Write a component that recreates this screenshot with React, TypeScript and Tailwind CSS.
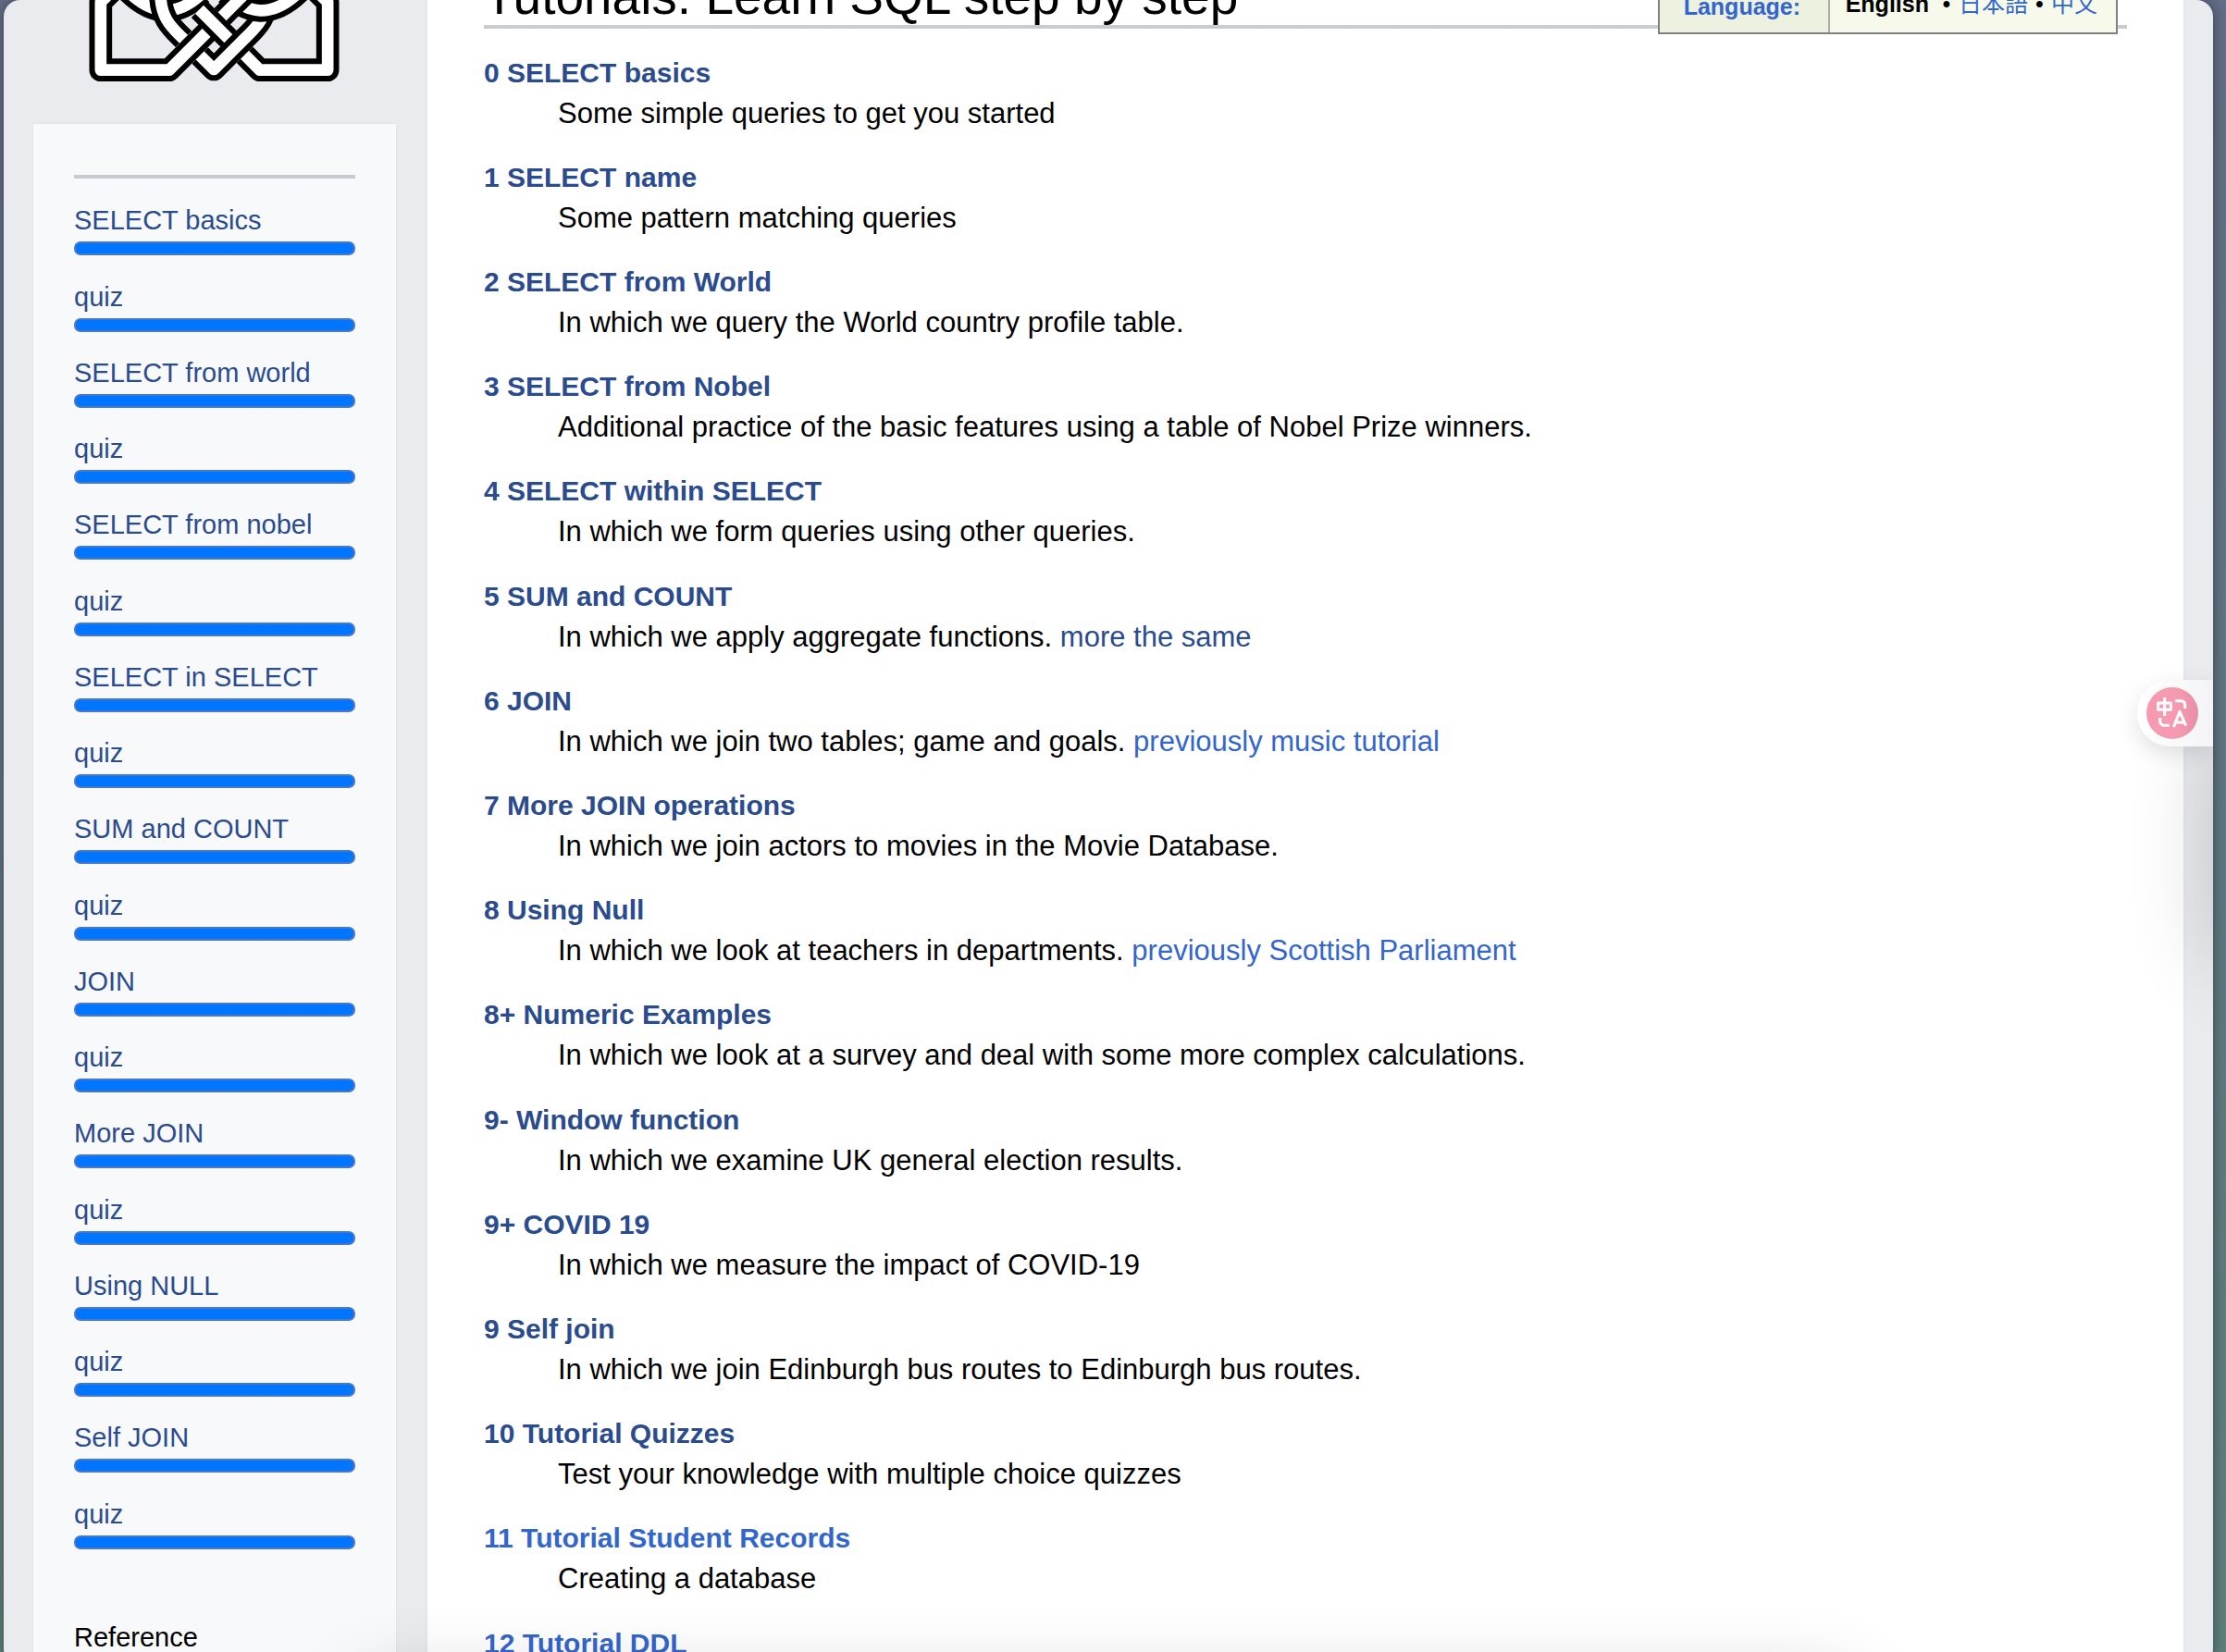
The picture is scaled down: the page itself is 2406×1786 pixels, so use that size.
const lessons = [
  "SELECT basics", "quiz", "SELECT from world", "quiz", "SELECT from nobel", "quiz",
  "SELECT in SELECT", "quiz", "SUM and COUNT", "quiz", "JOIN", "quiz",
  "More JOIN", "quiz", "Using NULL", "quiz", "Self JOIN", "quiz",
];

type Entry = {
  title: string;
  text?: string;
  fresh?: boolean;
  extra?: { label: string; fresh: boolean };
};

const tutorials: Entry[] = [
  { title: "0 SELECT basics", text: "Some simple queries to get you started" },
  { title: "1 SELECT name", text: "Some pattern matching queries" },
  { title: "2 SELECT from World", text: "In which we query the World country profile table." },
  { title: "3 SELECT from Nobel", text: "Additional practice of the basic features using a table of Nobel Prize winners." },
  { title: "4 SELECT within SELECT", text: "In which we form queries using other queries." },
  { title: "5 SUM and COUNT", text: "In which we apply aggregate functions.", extra: { label: "more the same", fresh: false } },
  { title: "6 JOIN", text: "In which we join two tables; game and goals.", extra: { label: "previously music tutorial", fresh: true } },
  { title: "7 More JOIN operations", text: "In which we join actors to movies in the Movie Database." },
  { title: "8 Using Null", text: "In which we look at teachers in departments.", extra: { label: "previously Scottish Parliament", fresh: true } },
  { title: "8+ Numeric Examples", text: "In which we look at a survey and deal with some more complex calculations." },
  { title: "9- Window function", text: "In which we examine UK general election results." },
  { title: "9+ COVID 19", text: "In which we measure the impact of COVID-19" },
  { title: "9 Self join", text: "In which we join Edinburgh bus routes to Edinburgh bus routes." },
  { title: "10 Tutorial Quizzes", text: "Test your knowledge with multiple choice quizzes" },
  { title: "11 Tutorial Student Records", text: "Creating a database", fresh: true },
  { title: "12 Tutorial DDL", fresh: true },
];

const linkColor = (fresh?: boolean) => (fresh ? "text-[#3366cc]" : "text-[#2a4b8d]");

/* Each strand is a wide black line with a narrower white one on top. */
function Strand({ d }: { d: string }) {
  return (
    <g fill="none" strokeLinejoin="round">
      <path d={d} stroke="#000" strokeWidth="74" />
      <path d={d} stroke="#fff" strokeWidth="38" />
    </g>
  );
}

/* Later strands pass over earlier ones. */
function Knot() {
  return (
    <svg viewBox="290 0 812 267" className="mr-[95px] ml-auto block h-[89px] w-[271px] shrink-0" aria-hidden="true">
      <Strand d="M405 -40 Q475 36 545 34 Q600 32 655 -20" />
      <Strand d="M522 -20 C522 60 560 90 597 127" />
      <Strand d="M420 -85 L328 7 L328 227 L550 227 L672 105" />
      <Strand d="M648 31 L743 126" />
      <Strand d="M795 178 L844 227 L1064 227 L1064 7 L972 -85" />
      <Strand d="M650 180 L695 225 L793 127 C830 90 868 60 868 -20" />
      <Strand d="M735 -20 Q790 32 845 34 Q915 36 985 -40" />
      <Strand d="M722 53 L810 -35" />
    </svg>
  );
}

function TranslateIcon() {
  return (
    <svg viewBox="30 15 168 168" className="size-14" fill="none" stroke="#fff" strokeWidth="9" aria-hidden="true">
      <path d="M68 66 H109 V88 H68 Z" strokeLinejoin="round" />
      <path d="M89 48 V108" />
      <path d="M123 59 H141 Q155 59 155 73 V84" />
      <path d="M74 114 V122 Q74 139 91 139 H104" />
      <path d="M118 144 L138 94 L158 140" strokeLinejoin="round" />
      <path d="M125 129 H152" />
    </svg>
  );
}

export default function App() {
  return (
    <div className="h-screen overflow-hidden bg-linear-to-b from-[#626d86] via-[#5f7580] to-[#5f7f7c] pr-[14px] pl-1 font-['Liberation_Sans',Arial,'Noto_Sans_CJK_JP',sans-serif] text-black">
      <div className="h-[calc(100%+14px)] rounded-[18px] shadow-[0_0_14px_rgba(0,0,0,0.4)]">
        <div className="relative flex h-full overflow-hidden rounded-[18px] bg-[#eaebef]">
          <aside className="flex w-[458px] shrink-0 flex-col">
            <Knot />
            <nav className="mt-[45px] mr-[34px] ml-8 grow bg-[#f8f9fb] px-11 pt-[55px] shadow-[0_0_4px_rgba(0,0,0,0.05)]">
              <hr className="h-1 border-0 bg-[#c8ccd1]" />
              <ul className="mt-7">
                {lessons.map((lesson, i) => (
                  <li key={i} className="mb-[27px] nth-[4n+1]:mb-7">
                    <a href="#" className="mb-1.5 block text-[29px] leading-[34px] text-[#2a4b8d]">{lesson}</a>
                    <div className="h-[15px] rounded-[7px] border-2 border-[#4a78c8] bg-[#0075ff]" />
                  </li>
                ))}
              </ul>
              <p className="mt-[78px] text-[29px] leading-[34px]">Reference</p>
            </nav>
          </aside>
          <main className="mr-8 min-w-0 grow bg-white px-[61px] shadow-[0_0_5px_rgba(0,0,0,0.05)]">
            <h1 className="-mt-[35px] border-b-4 border-[#c8ccd1] text-[55px] leading-[62px]">Tutorials: Learn SQL step by step</h1>
            <dl className="mt-[26px]">
              {tutorials.map((t) => (
                <div key={t.title} className="mb-[25px] nth-[5n]:mb-[26px]">
                  <dt className="text-[30px] leading-[43px] font-bold">
                    <a href="#" className={linkColor(t.fresh)}>{t.title}</a>
                  </dt>
                  {t.text && (
                    <dd className="ml-20 text-[31px] leading-[45px]">
                      {t.text}
                      {t.extra && (
                        <>
                          {" "}
                          <a href="#" className={linkColor(t.extra.fresh)}>{t.extra.label}</a>
                        </>
                      )}
                    </dd>
                  )}
                </div>
              ))}
            </dl>
          </main>

          <div className="absolute -top-3.5 right-[103px] flex border-2 border-[#808080] text-[25px] leading-8">
            <div className="w-[184px] border-r-2 border-[#a9abad] bg-[#edf1e0] pt-[3px] pb-3 pl-[26px] font-bold">
              <a href="#" className="text-[#3366cc]">Language:</a>
            </div>
            <div className="flex bg-[#f7f9ea] pr-5 pb-[15px] pl-[17px]">
              <b>English</b>
              <span className="w-8 pl-1.5 text-center">•</span>
              <a href="#" lang="ja" className="text-[#3366cc]">日本語</a>
              <span className="w-[25px] text-center">•</span>
              <a href="#" lang="zh" className="text-[#3366cc]">中文</a>
            </div>
          </div>

          <div className="pointer-events-none absolute top-[800px] -right-20 h-[240px] w-20 rounded-l-3xl shadow-[0_0_90px_rgba(0,0,0,0.19)]" />
          <button
            type="button"
            aria-label="Translate"
            className="absolute top-[735px] right-0 flex h-[72px] w-[82px] items-center rounded-l-full bg-linear-to-r from-white to-[#f3f4f5] pl-2.5 shadow-[0_8px_24px_rgba(0,0,0,0.12)]"
          >
            <span className="rounded-full bg-linear-to-r from-[#f59ab1] from-60% to-[#e78fa6]">
              <TranslateIcon />
            </span>
          </button>
          <div className="pointer-events-none absolute inset-x-[390px] -bottom-20 h-16 shadow-[0_0_80px_rgba(0,0,0,0.2)]" />
        </div>
      </div>
    </div>
  );
}
